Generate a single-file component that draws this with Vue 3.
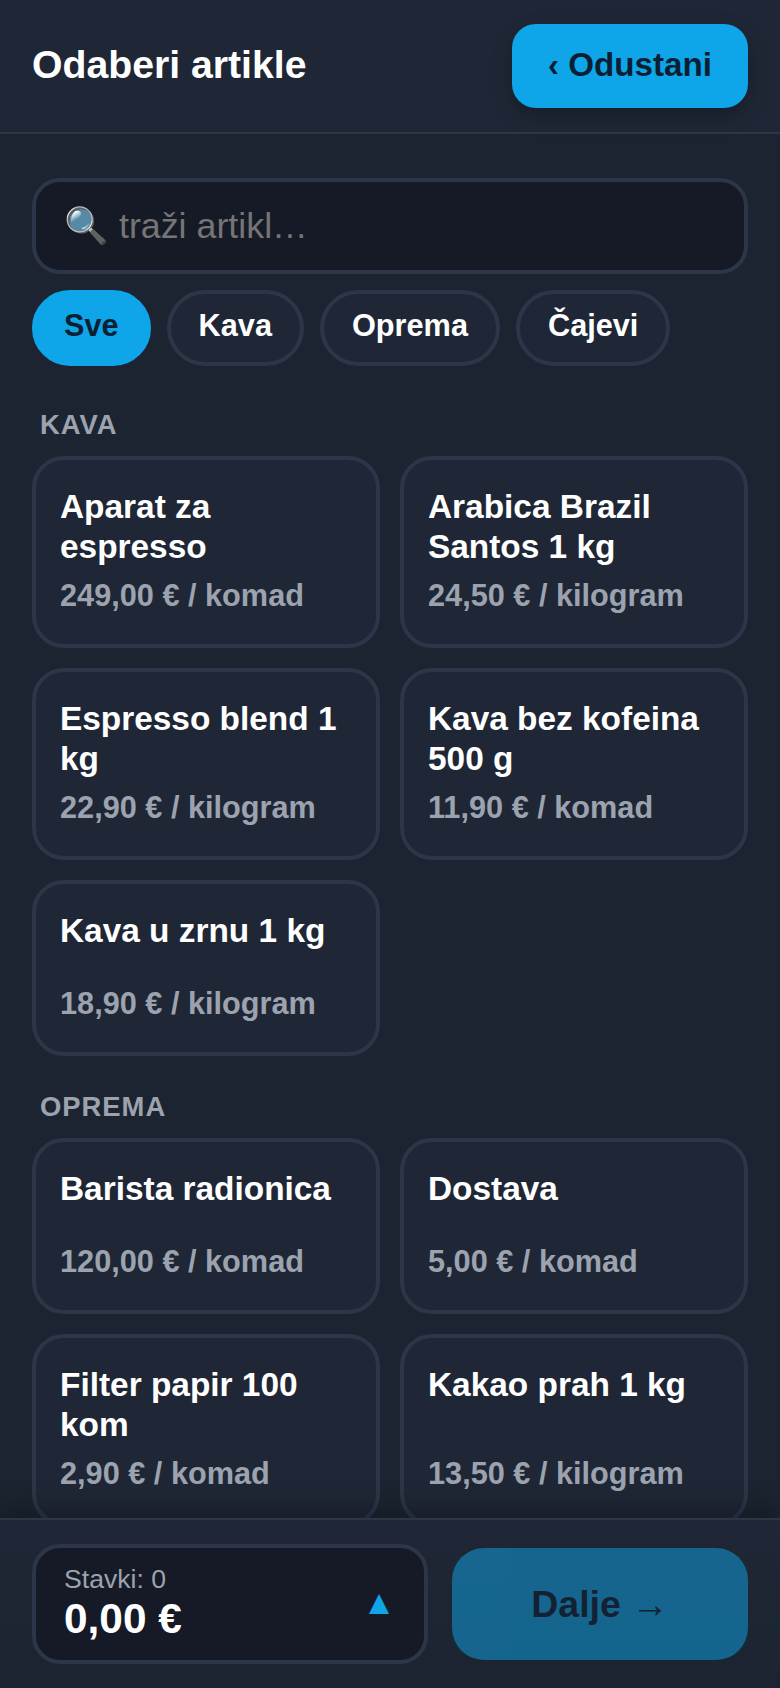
<script setup>
const filters = ['Sve', 'Kava', 'Oprema', 'Čajevi']
const sections = [
  { name: 'KAVA', items: [
    ['Aparat za espresso', '249,00 € / komad'],
    ['Arabica Brazil Santos 1 kg', '24,50 € / kilogram'],
    ['Espresso blend 1 kg', '22,90 € / kilogram'],
    ['Kava bez kofeina 500 g', '11,90 € / komad'],
    ['Kava u zrnu 1 kg', '18,90 € / kilogram'],
  ]},
  { name: 'OPREMA', items: [
    ['Barista radionica', '120,00 € / komad'],
    ['Dostava', '5,00 € / komad'],
    ['Filter papir 100 kom', '2,90 € / komad'],
    ['Kakao prah 1 kg', '13,50 € / kilogram'],
  ]},
]
</script>

<template>
  <div class="app">
    <header class="top">
      <h1>Odaberi artikle</h1>
      <button class="cancel">‹ Odustani</button>
    </header>
    <main class="list">
      <input class="search" placeholder="🔍 traži artikl…" />
      <div class="pills">
        <button v-for="(f, i) in filters" :key="f" class="pill" :class="{ on: i === 0 }">{{ f }}</button>
      </div>
      <section v-for="s in sections" :key="s.name" class="sec">
        <h2>{{ s.name }}</h2>
        <div class="grid">
          <button v-for="it in s.items" :key="it[0]" class="card">
            <span class="name">{{ it[0] }}</span>
            <span class="meta">{{ it[1] }}</span>
          </button>
        </div>
      </section>
    </main>
    <footer class="bottom">
      <div class="sum">
        <div class="sum-text">
          <div class="count">Stavki: 0</div>
          <div class="total">0,00 €</div>
        </div>
        <span class="caret">▲</span>
      </div>
      <button class="next">Dalje →</button>
    </footer>
  </div>
</template>

<style>
html, body { margin: 0; background: #1b2430; }
</style>

<style scoped>
* { box-sizing: border-box; }
.app {
  width: 780px; height: 1688px; display: flex; flex-direction: column; overflow: hidden;
  background: #1b2430; color: #fff;
  font-family: "Liberation Sans", Arial, sans-serif;
}
button { font-family: inherit; }
.top {
  flex: none; height: 134px; padding: 24px 32px; display: flex; align-items: center; justify-content: space-between;
  background: #1f2736; border-bottom: 2px solid #2d3548;
}
h1 { margin: 0 0 2px; font-size: 39.2px; font-weight: 700; }
.cancel {
  width: 236px; height: 84px; padding: 0 0 2px; border: 0; border-radius: 24px; background: #0ea5e9; color: #0b1f33;
  font-size: 33.2px; font-weight: 700; box-shadow: 0 8px 20px rgba(0,0,0,.25);
}
.list { flex: 1; min-height: 0; overflow: hidden; padding: 44px 32px 0; }
.search {
  display: block; width: 100%; height: 96px; padding: 0 28px; border: 4px solid #2d3548; border-radius: 28px;
  background: #151a26; color: #fff; font-size: 35.8px; font-family: inherit; outline: 0;
}
.pills { display: flex; gap: 16px; margin-top: 16px; padding-bottom: 7px; }
.pill {
  height: 76px; padding: 0 28px 5px; border: 4px solid #2d3548; border-radius: 38px; background: #1f2736; color: #fff;
  font-size: 30.7px; font-weight: 700;
}
.pill.on { background: #0ea5e9; border-color: #0ea5e9; color: #0b1f33; }
.sec { margin-top: 36px; }
.sec + .sec { margin-top: 35px; }
h2 { margin: 0 0 15px 8px; font-size: 27.4px; line-height: 32px; font-weight: 700; letter-spacing: 1px; color: #9ca3af; }
.grid { display: grid; grid-template-columns: 1fr 1fr; gap: 20px; }
.card {
  min-height: 176px; padding: 27px 24px 29px; border: 4px solid #2d3548; border-radius: 32px; background: #1f2736;
  display: flex; flex-direction: column; justify-content: space-between; text-align: left; color: #fff;
}
.name { font-size: 33.4px; line-height: 40px; font-weight: 700; }
.meta { margin-top: 10px; font-size: 30.7px; line-height: 38px; font-weight: 700; color: #9ca3af; }
.bottom {
  flex: none; height: 170px; padding: 24px 32px; display: flex; align-items: center; gap: 24px;
  background: linear-gradient(#1f2736, #1b2430); border-top: 2px solid #2d3548; box-shadow: 0 -10px 24px rgba(0,0,0,.25);
  position: relative;
}
.sum {
  width: 396px; height: 120px; padding: 0 28px; border: 4px solid #2d3548; border-radius: 28px; background: #151a26;
  display: flex; align-items: center; justify-content: space-between;
}
.sum-text { margin-bottom: 4px; }
.count { font-size: 26.6px; line-height: 32px; margin-bottom: 1px; color: #9ca3af; }
.total { font-size: 42.4px; line-height: 46px; font-weight: 700; }
.caret { color: #0ea5e9; font-size: 34px; margin-bottom: 4px; }
.next {
  flex: 1; height: 112px; border: 0; border-radius: 32px; background: #0ea5e9; opacity: .5; color: #0b1f33;
  font-size: 37.5px; font-weight: 700;
}
</style>
